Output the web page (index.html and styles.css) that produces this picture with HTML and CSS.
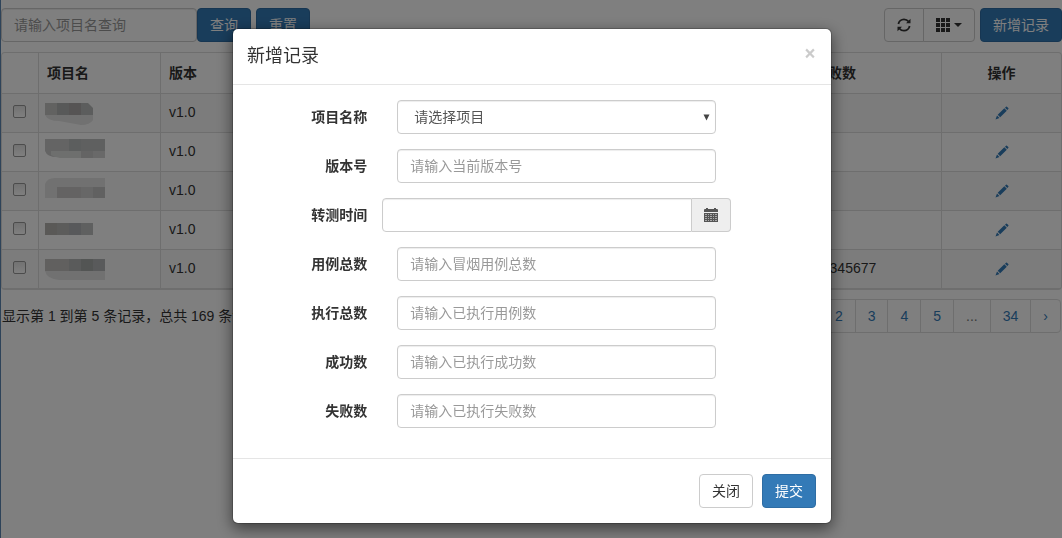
FILE: index.html
```html
<!DOCTYPE html>
<html lang="zh-CN">
<head>
<meta charset="utf-8">
<title>新增记录</title>
<link rel="stylesheet" href="styles.css">
</head>
<body>
<svg class="defs" aria-hidden="true">
  <symbol id="pencil" viewBox="0 0 14 14">
    <path d="M10 1.800 11 .800Q11.600.300 12.200.900L13.300 2Q13.800 2.600 13.300 3.100L12.300 4zM9.300 2.200 11.800 4.700 5.200 11.300 2.700 8.800zM2 9.500 4.500 12 .500 13.500z"/>
  </symbol>
</svg>
<main class="page">
  <div class="toolbar">
    <form class="search">
      <input class="control" type="text" placeholder="请输入项目名查询" aria-label="项目名">
      <button class="btn primary" type="button">查询</button>
      <button class="btn primary spaced" type="button">重置</button>
    </form>
    <div class="tools">
      <div class="group">
        <button class="btn" type="button" aria-label="刷新">
          <svg class="icon" viewBox="0 0 14 14"><g fill="none" stroke="currentColor" stroke-width="1.800"><path d="M1.400 6C1.800 3.300 4.200 1.300 7 1.300 8.800 1.300 10.400 2 11.600 3.500M12.600 8C12.200 10.700 9.800 12.700 7 12.700 5.200 12.700 3.600 12 2.400 10.500"/></g><path d="M13.500.8V5.300H9zM.5 13.200V8.700H5z"/></svg>
        </button>
        <button class="btn" type="button" aria-label="列">
          <svg class="icon" viewBox="0 0 14 14"><path d="M0 0h4v4H0zM5 0h4v4H5zM10 0h4v4h-4zM0 5h4v4H0zM5 5h4v4H5zM10 5h4v4h-4zM0 10h4v4H0zM5 10h4v4H5zM10 10h4v4h-4z"/></svg>
          <span class="caret"></span>
        </button>
      </div>
      <button class="btn primary" type="button">新增记录</button>
    </div>
  </div>
  <div class="frame">
    <table class="records">
      <colgroup><col class="c-check"><col class="c-name"><col><col><col><col><col><col class="c-fail"><col class="c-action"></colgroup>
      <thead>
        <tr><th></th><th>项目名</th><th>版本</th><th>转测时间</th><th>用例总数</th><th>执行总数</th><th>成功数</th><th>失败数</th><th class="center">操作</th></tr>
      </thead>
      <tbody>
        <tr>
          <td class="center"><input class="check" type="checkbox" aria-label="选择第 1 行"></td>
          <td class="name"><svg class="mosaic" viewBox="0 0 60 26"><path fill="#e2e2e2" d="M0 15H48V20Q45 25 36 25L14 21Q3 21 0 15z"/><path fill="#c4c4c2" d="M0 3H12V15H0z"/><path fill="#b0b2b2" d="M12 3H24V15H12z"/><path fill="#aca8a9" d="M24 3H36V15H24z"/><path fill="#b9bbba" d="M36 3H43L48 8V15H36z"/></svg></td>
          <td>v1.0</td><td></td><td></td><td></td><td></td><td></td>
          <td class="center"><a class="edit" href="#" aria-label="编辑"><svg class="icon"><use href="#pencil"/></svg></a></td>
        </tr>
        <tr>
          <td class="center"><input class="check" type="checkbox" aria-label="选择第 2 行"></td>
          <td class="name"><svg class="mosaic" viewBox="0 0 60 26"><path fill="#c9c9c9" d="M0 0H24V12H12V18Q2 18 0 12z"/><path fill="#b9bdbc" d="M24 0H36V12H24z"/><path fill="#bfc1c1" d="M36 0H60V12H36z"/><path fill="#dcdedd" d="M6 12H36V19H15Q9 18 6 16z"/><path fill="#c8c8c9" d="M36 12H48V19H36z"/><path fill="#d2d2d2" d="M48 12H60V19H48z"/></svg></td>
          <td>v1.0</td><td></td><td></td><td></td><td></td><td></td>
          <td class="center"><a class="edit" href="#" aria-label="编辑"><svg class="icon"><use href="#pencil"/></svg></a></td>
        </tr>
        <tr>
          <td class="center"><input class="check" type="checkbox" aria-label="选择第 3 行"></td>
          <td class="name"><svg class="mosaic" viewBox="0 0 60 26"><path fill="#e2e2e2" d="M0 6Q2 0 10 0H60V9H12V20H0z"/><path fill="#c8c7c6" d="M12 9H36V20H12z"/><path fill="#cecece" d="M36 9H48V20H36z"/><path fill="#c3c3c3" d="M48 9H60V20H48z"/></svg></td>
          <td>v1.0</td><td></td><td></td><td></td><td></td><td></td>
          <td class="center"><a class="edit" href="#" aria-label="编辑"><svg class="icon"><use href="#pencil"/></svg></a></td>
        </tr>
        <tr>
          <td class="center"><input class="check" type="checkbox" aria-label="选择第 4 行"></td>
          <td class="name"><svg class="mosaic" viewBox="0 0 60 26"><path fill="#b5b2af" d="M0 6H12V18H0z"/><path fill="#b9b9b7" d="M12 6H24V18H12z"/><path fill="#b1b3b6" d="M24 6H36V18H24z"/><path fill="#bfc1c1" d="M36 6H48V18H36z"/></svg></td>
          <td>v1.0</td><td></td><td></td><td></td><td></td><td></td>
          <td class="center"><a class="edit" href="#" aria-label="编辑"><svg class="icon"><use href="#pencil"/></svg></a></td>
        </tr>
        <tr>
          <td class="center"><input class="check" type="checkbox" aria-label="选择第 5 行"></td>
          <td class="name"><svg class="mosaic" viewBox="0 0 60 26"><path fill="#e2e2e2" d="M0 15H60V24H14Q2 23 0 15z"/><path fill="#c2c0be" d="M0 3H24V15H0z"/><path fill="#b5b6b7" d="M24 3H36V15H24z"/><path fill="#a7aaa9" d="M36 3H48V15H36z"/><path fill="#b3b4b6" d="M48 3H60V15H48z"/></svg></td>
          <td>v1.0</td><td></td><td></td><td></td><td></td><td>12345677</td>
          <td class="center"><a class="edit" href="#" aria-label="编辑"><svg class="icon"><use href="#pencil"/></svg></a></td>
        </tr>
      </tbody>
    </table>
  </div>
  <div class="footer">
    <span>显示第 1 到第 5 条记录，总共 169 条记录</span>
    <nav class="pages" aria-label="分页">
      <a href="#">‹</a><a href="#">1</a><a href="#">2</a><a href="#">3</a><a href="#">4</a><a href="#">5</a><a class="gap" href="#">...</a><a href="#">34</a><a href="#">›</a>
    </nav>
  </div>
</main>

<div class="backdrop">
  <section class="modal" role="dialog" aria-modal="true" aria-labelledby="title">
    <header class="modal-head">
      <h4 class="modal-title" id="title">新增记录</h4>
      <button class="close" type="button" aria-label="关闭窗口">×</button>
    </header>
    <form class="modal-body">
      <div class="row">
        <label for="project">项目名称</label>
        <div class="field select">
          <select class="control" id="project"><option>请选择项目</option></select>
          <svg class="arrow" viewBox="0 0 7 7" aria-hidden="true"><path d="M.5.5H6.500L3.500 6.500z"/></svg>
        </div>
      </div>
      <div class="row">
        <label for="version">版本号</label>
        <div class="field"><input class="control" id="version" type="text" placeholder="请输入当前版本号"></div>
      </div>
      <div class="row">
        <label for="date">转测时间</label>
        <div class="field date">
          <input class="control" id="date" type="text">
          <button class="addon" type="button" aria-label="选择日期">
            <svg class="icon" viewBox="0 0 14 14"><path d="M0 4V2Q0 1 1 1H2V0H4V1H10V0H12V1H13Q14 1 14 2V4zM0 5H14V14H0z"/><path fill="#aaa" d="M1 6H3V7H1zM4 6H5V7H4zM6 6H8V7H6zM9 6H10V7H9zM11 6H13V7H11zM1 8H3V9H1zM4 8H5V9H4zM6 8H8V9H6zM9 8H10V9H9zM11 8H13V9H11zM1 10H3V11H1zM4 10H5V11H4zM6 10H8V11H6zM9 10H10V11H9zM11 10H13V11H11zM1 12H3V13H1zM4 12H5V13H4zM6 12H8V13H6zM9 12H10V13H9zM11 12H13V13H11z"/></svg>
          </button>
        </div>
      </div>
      <div class="row">
        <label for="cases">用例总数</label>
        <div class="field"><input class="control" id="cases" type="text" placeholder="请输入冒烟用例总数"></div>
      </div>
      <div class="row">
        <label for="executed">执行总数</label>
        <div class="field"><input class="control" id="executed" type="text" placeholder="请输入已执行用例数"></div>
      </div>
      <div class="row">
        <label for="passed">成功数</label>
        <div class="field"><input class="control" id="passed" type="text" placeholder="请输入已执行成功数"></div>
      </div>
      <div class="row">
        <label for="failed">失败数</label>
        <div class="field"><input class="control" id="failed" type="text" placeholder="请输入已执行失败数"></div>
      </div>
    </form>
    <footer class="modal-foot">
      <button class="btn" type="button">关闭</button>
      <button class="btn primary" type="button">提交</button>
    </footer>
  </section>
</div>
</body>
</html>
```

FILE: styles.css
```css
* { box-sizing: border-box; }

body {
  margin: 0;
  overflow: hidden;
  background: #fff;
  color: #333;
  font: 14px/20px "Liberation Sans", "Noto Sans CJK SC", sans-serif;
}

button, input, select { font: inherit; color: inherit; margin: 0; }
a { color: #337ab7; text-decoration: none; }

.defs { position: absolute; width: 0; height: 0; }
.icon { display: block; width: 14px; height: 14px; fill: currentColor; }

.page {
  min-height: 100vh;
  padding-top: 8px;
  border-left: 1px solid #5c87b2;
}

.toolbar { display: flex; justify-content: space-between; margin-bottom: 10px; }
.search, .tools, .group { display: flex; }
.search .control { width: 196px; }
.spaced { margin-left: 5px; }
.tools { gap: 5px; }

.control {
  display: block;
  width: 100%;
  height: 34px;
  padding: 6px 12px;
  border: 1px solid #ccc;
  border-radius: 4px;
  background: #fff;
  box-shadow: inset 0 1px 1px rgba(0, 0, 0, .075);
  color: #555;
}
.control::placeholder { color: #999; opacity: 1; }

.btn {
  display: flex;
  align-items: center;
  height: 34px;
  padding: 6px 12px;
  border: 1px solid #ccc;
  border-radius: 4px;
  background: #fff;
  white-space: nowrap;
}
.btn.primary { background: #337ab7; border-color: #2e6da4; color: #fff; }
.group .btn:first-child { border-radius: 4px 0 0 4px; }
.group .btn:last-child { border-radius: 0 4px 4px 0; margin-left: -1px; }

.caret {
  margin-left: 4px;
  border-top: 4px solid;
  border-left: 4px solid transparent;
  border-right: 4px solid transparent;
}

.frame { border: 1px solid #ddd; border-bottom-width: 2px; border-radius: 4px; overflow: hidden; }
.records { width: 100%; table-layout: fixed; border-collapse: separate; border-spacing: 0; }
.c-check { width: 37px; }
.c-name { width: 122px; }
.c-fail { width: 136px; }
.c-action { width: 119px; }
.records th, .records td {
  height: 39px;
  padding: 0 8px;
  border-right: 1px solid #ddd;
  border-bottom: 1px solid #ddd;
  text-align: left;
  white-space: nowrap;
}
.records td { padding-bottom: 2px; }
.records th { height: 41px; }
.records tr > :last-child { border-right: 0; }
.records tbody tr:last-child td { height: 38px; border-bottom: 0; }
.records tbody tr:nth-child(odd) { background: #f9f9f9; }
.records .center { text-align: center; }
.records .name { padding: 0 6px; }
.mosaic { display: block; width: 60px; height: 26px; }
.edit { display: inline-block; vertical-align: middle; }

.check {
  appearance: none;
  display: block;
  width: 13px;
  height: 13px;
  margin: 0 auto 2px;
  border: 1px solid #999;
  border-radius: 2px;
  background: linear-gradient(#e4e4e4, #fff);
}
.records td:first-child { padding-right: 9px; }

.footer { display: flex; justify-content: space-between; align-items: center; margin: 9px 1px 0; }
.pages { display: flex; }
.pages a {
  height: 34px;
  padding: 6px 12px;
  margin-left: -1px;
  border: 1px solid #ddd;
  background: #fff;
}
.pages a:first-child { border-radius: 4px 0 0 4px; }
.pages a:last-child { border-radius: 0 4px 4px 0; }
.pages .gap { color: #777; }

.backdrop {
  position: fixed;
  inset: 0;
  padding: 28px 0 0 2px;
  background: rgba(0, 0, 0, .5);
}

.modal {
  width: 100%;
  max-width: 600px;
  margin: 0 auto;
  border: 1px solid rgba(0, 0, 0, .2);
  border-radius: 6px;
  background: #fff;
  background-clip: padding-box;
  box-shadow: 0 5px 15px rgba(0, 0, 0, .5);
}

.modal-head {
  display: flex;
  justify-content: space-between;
  align-items: center;
  padding: 15px 15px 15px 14px;
  border-bottom: 1px solid #e5e5e5;
}
.modal-title { margin: 0; font-size: 18px; line-height: 25px; font-weight: 400; }
.close {
  padding: 0 0 6px;
  border: 0;
  background: none;
  color: #000;
  font: 700 21px/19px "Open Sans", sans-serif;
  text-shadow: 0 1px 0 #fff;
  opacity: .2;
}

.modal-body { display: grid; gap: 15px; padding: 15px 1px 30px 0; }
.row { display: grid; grid-template-columns: 3fr 7fr 2fr; }
.row label { padding: 7px 15px 7px 0; text-align: right; font-weight: 700; }
.field { padding: 0 15px; }
.select { position: relative; }
.select select { appearance: none; padding-left: 16px; }
.arrow { position: absolute; right: 21px; top: 14px; width: 7px; height: 7px; fill: #444; pointer-events: none; }
.date { display: flex; padding: 0; }
.date .control { flex: 1; min-width: 0; border-radius: 4px 0 0 4px; }
.addon {
  padding: 6px 12px;
  border: 1px solid #ccc;
  border-left: 0;
  border-radius: 0 4px 4px 0;
  background: #eee;
  color: #555;
}

.modal-foot {
  display: flex;
  justify-content: flex-end;
  gap: 9px;
  padding: 15px 15px;
  border-top: 1px solid #e5e5e5;
}
```
